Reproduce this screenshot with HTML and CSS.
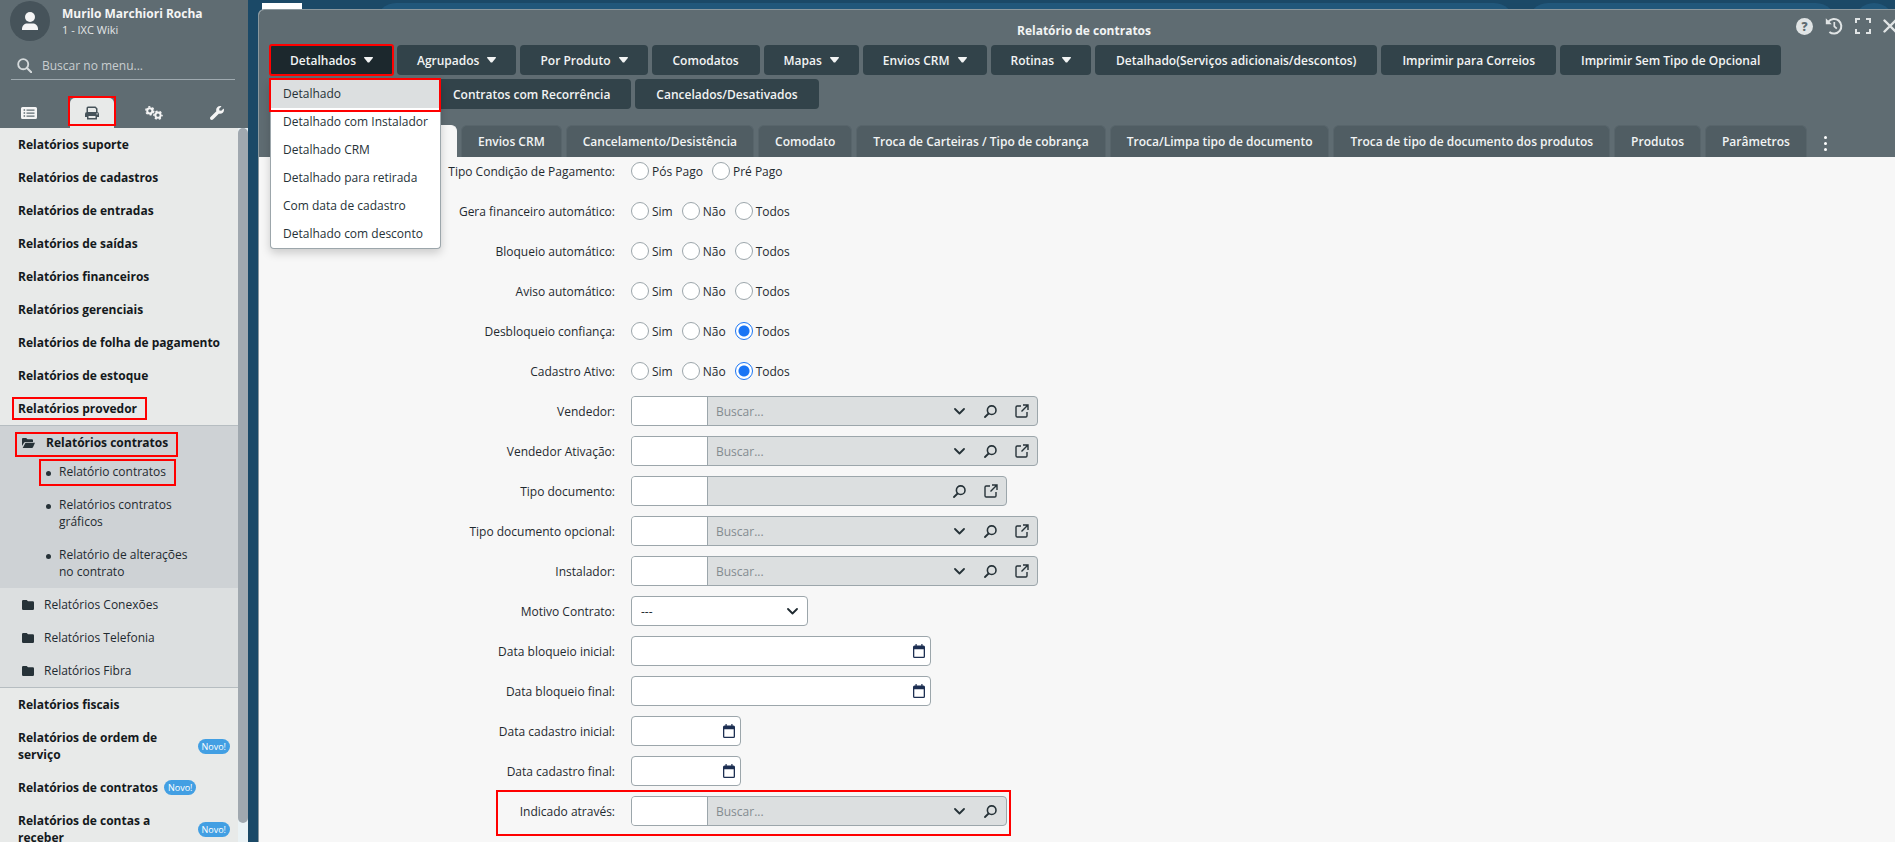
FILE: index.html
```html
<!DOCTYPE html>
<html lang="pt-BR">
<head>
<meta charset="utf-8">
<title>Relatório de contratos</title>
<link rel="stylesheet" href="styles.css">
</head>
<body>
<svg class="defs" aria-hidden="true">
  <symbol id="i-user" viewBox="0 0 16 18"><circle cx="8" cy="5" r="5"/><path d="M0 18.5V17c0-3.500 2.500-5.500 5.500-5.500h5c3 0 5.500 2 5.500 5.500v1.500z"/></symbol>
  <symbol id="i-search" viewBox="0 0 14 14"><circle cx="5.800" cy="5.800" r="4.700" fill="none" stroke="currentColor" stroke-width="1.700"/><path d="M9.300 9.300L13.300 13.300" stroke="currentColor" stroke-width="1.900" stroke-linecap="round"/></symbol>
  <symbol id="i-list" viewBox="0 0 16 12"><path fill-rule="evenodd" d="M1.500 0h13A1.500 1.500 0 0 1 16 1.500v9a1.500 1.500 0 0 1-1.500 1.500h-13A1.500 1.500 0 0 1 0 10.500v-9A1.500 1.500 0 0 1 1.500 0zM2.600 2.300v1.500h1.500V2.300zm0 3v1.500h1.500V5.300zm0 3v1.500h1.500V8.300zM5.500 2.500v1.200h8V2.500zm0 3v1.200h8V5.500zm0 3v1.200h8V8.500z"/></symbol>
  <symbol id="i-print" viewBox="0 0 14 14"><path fill-rule="evenodd" d="M1.500 6V2A1.500 1.500 0 0 1 3 .5h7.500L12.500 2.500V6H11V3L10 2H3v4zM2 6h10a2 2 0 0 1 2 2v3h-2v2.500H2V11H0V8a2 2 0 0 1 2-2zm1.500 4v2h7v-2zM11.500 7.300v1.200h1.200V7.300z"/></symbol>
  <symbol id="i-gears" viewBox="0 0 18 14"><g fill="none" stroke="currentColor"><circle cx="4.800" cy="4.800" r="2.600" stroke-width="2"/><circle cx="4.800" cy="4.800" r="4" stroke-width="1.500" stroke-dasharray="2.100 2.090"/><circle cx="13" cy="9.200" r="2.600" stroke-width="2"/><circle cx="13" cy="9.200" r="4" stroke-width="1.500" stroke-dasharray="2.100 2.090" stroke-dashoffset="1"/></g></symbol>
  <symbol id="i-wrench" viewBox="0 0 512 512"><path d="M507.700 109.100c-2.200-9-13.500-12.100-20.100-5.500l-74.400 74.400-67.900-11.300L334 98.900l74.400-74.400c6.600-6.600 3.400-17.900-5.700-20.200-47.400-11.700-99.600.9-136.600 37.900-39.600 39.600-50.500 97.100-34.100 147.200L18.700 402.800c-25 25-25 65.500 0 90.500s65.500 25 90.500 0l213.200-213.200c50.100 16.700 107.500 5.700 147.400-34.200 37.100-37.100 49.700-89.300 37.900-136.800z"/></symbol>
  <symbol id="i-folder" viewBox="0 0 12 10"><path d="M1.200 0h3.500L6 1.300h4.800A1.200 1.200 0 0 1 12 2.500v6.300A1.200 1.200 0 0 1 10.800 10H1.200A1.200 1.200 0 0 1 0 8.800V1.200A1.200 1.200 0 0 1 1.200 0z"/></symbol>
  <symbol id="i-open" viewBox="0 0 13 10"><path d="M0 8V1a1 1 0 0 1 1-1h3.200l1.300 1.300H10a1 1 0 0 1 1 1V4H3.400A1.600 1.600 0 0 0 2 4.800zM3.500 4.700H13L11 9.200a1.200 1.200 0 0 1-1.100.8H.7z"/></symbol>
  <symbol id="i-history" viewBox="0 0 18 18"><path d="M3.400 4.600A7.300 7.300 0 1 1 4.400 14.900" fill="none" stroke="currentColor" stroke-width="2"/><path d="M.8 1.300v6h6z"/><path d="M9.300 5v4.300l2.500 2.400" fill="none" stroke="currentColor" stroke-width="1.700"/></symbol>
  <symbol id="i-expand" viewBox="0 0 16 16"><path d="M1 5V1h4M11 1h4v4M15 11v4h-4M5 15H1v-4" fill="none" stroke="currentColor" stroke-width="2"/></symbol>
  <symbol id="i-close" viewBox="0 0 14 14"><path d="M1.500 1.500l11 11M12.500 1.500l-11 11" stroke="currentColor" stroke-width="2.400" stroke-linecap="round"/></symbol>
  <symbol id="i-caret" viewBox="0 0 9 6"><path d="M.3 0h8.400L9 .8 5.200 5.500H3.800L0 .8z"/></symbol>
  <symbol id="i-chev" viewBox="0 0 11 7"><path d="M1 1l4.500 4.500L10 1" fill="none" stroke="currentColor" stroke-width="1.800" stroke-linecap="round" stroke-linejoin="round"/></symbol>
  <symbol id="i-find" viewBox="0 0 13 13"><circle cx="7.700" cy="5.200" r="4.300" fill="none" stroke="currentColor" stroke-width="1.600"/><path d="M4.600 8.500L1 12" stroke="currentColor" stroke-width="1.800" stroke-linecap="round"/></symbol>
  <symbol id="i-ext" viewBox="0 0 14 14"><path d="M6 2H2.200A1.200 1.200 0 0 0 1 3.200v8.600A1.200 1.200 0 0 0 2.200 13h8.600a1.200 1.200 0 0 0 1.200-1.200V8M8 1h5v5M12.700 1.300L6.500 7.500" fill="none" stroke="currentColor" stroke-width="1.400"/></symbol>
  <symbol id="i-cal" viewBox="0 0 12 14"><path fill-rule="evenodd" d="M2.500 0h1.200v1.500h4.600V0h1.200v1.500h1A1.500 1.500 0 0 1 12 3v9.500a1.500 1.500 0 0 1-1.500 1.500h-9A1.500 1.500 0 0 1 0 12.500V3a1.500 1.500 0 0 1 1.500-1.500h1zM1.300 5.200v7.500h9.400V5.200z"/></symbol>
</svg>
<div class="app">
  <aside class="sidebar">
    <header class="side-head">
      <div class="user">
        <span class="avatar"><svg width="16" height="18"><use href="#i-user"/></svg></span>
        <div><strong class="user-name">Murilo Marchiori Rocha</strong><span class="user-org">1 - IXC Wiki</span></div>
      </div>
      <label class="menu-search"><svg width="15" height="15"><use href="#i-search"/></svg><input type="text" placeholder="Buscar no menu..." aria-label="Buscar no menu"></label>
      <nav class="side-tabs">
        <button class="side-tab" aria-label="Menu"><svg width="16" height="12"><use href="#i-list"/></svg></button>
        <button class="side-tab active" aria-label="Relatórios"><svg width="14" height="14"><use href="#i-print"/></svg></button>
        <button class="side-tab" aria-label="Configurações"><svg width="18" height="14"><use href="#i-gears"/></svg></button>
        <button class="side-tab" aria-label="Ferramentas"><svg width="14" height="14"><use href="#i-wrench"/></svg></button>
      </nav>
    </header>
    <div class="side-body">
      <nav class="menu">
        <a href="#" class="item">Relatórios suporte</a>
        <a href="#" class="item">Relatórios de cadastros</a>
        <a href="#" class="item">Relatórios de entradas</a>
        <a href="#" class="item">Relatórios de saídas</a>
        <a href="#" class="item">Relatórios financeiros</a>
        <a href="#" class="item">Relatórios gerenciais</a>
        <a href="#" class="item">Relatórios de folha de pagamento</a>
        <a href="#" class="item">Relatórios de estoque</a>
        <a href="#" class="item"><span class="mark mark-provider">Relatórios provedor</span></a>
        <div class="group">
          <div class="open">
            <a href="#" class="open-head"><span class="mark mark-folder"><svg width="13" height="10"><use href="#i-open"/></svg>Relatórios contratos</span></a>
            <a href="#" class="leaf"><span class="mark mark-leaf">Relatório contratos</span></a>
            <a href="#" class="leaf">Relatórios contratos gráficos</a>
            <a href="#" class="leaf">Relatório de alterações no contrato</a>
          </div>
          <a href="#" class="folder"><svg width="12" height="10"><use href="#i-folder"/></svg>Relatórios Conexões</a>
          <a href="#" class="folder"><svg width="12" height="10"><use href="#i-folder"/></svg>Relatórios Telefonia</a>
          <a href="#" class="folder"><svg width="12" height="10"><use href="#i-folder"/></svg>Relatórios Fibra</a>
        </div>
        <a href="#" class="item">Relatórios fiscais</a>
        <a href="#" class="item tagged"><span>Relatórios de ordem de serviço</span><em class="tag">Novo!</em></a>
        <a href="#" class="item tagged"><span>Relatórios de contratos</span><em class="tag">Novo!</em></a>
        <a href="#" class="item tagged"><span>Relatórios de contas a receber</span><em class="tag">Novo!</em></a>
      </nav>
      <div class="track"><div class="thumb"></div></div>
    </div>
  </aside>
  <main class="desk">
    <div class="backdrop"><i class="bd-white"></i><i class="bd-bar"></i><i class="bd-bar2"></i><i class="bd-dot"></i></div>
    <section class="window">
      <header class="win-head">
        <div class="title-row">
          <h1 class="title">Relatório de contratos</h1>
          <div class="win-tools">
            <button class="help" aria-label="Ajuda">?</button>
            <button aria-label="Histórico"><svg width="18" height="18"><use href="#i-history"/></svg></button>
            <button aria-label="Expandir"><svg width="16" height="16"><use href="#i-expand"/></svg></button>
            <button aria-label="Fechar"><svg width="14" height="14"><use href="#i-close"/></svg></button>
          </div>
        </div>
        <div class="toolbar">
          <div class="btn-row">
            <div class="drop">
              <button class="btn current" aria-expanded="true">Detalhados<svg width="9" height="6"><use href="#i-caret"/></svg></button>
              <div class="dropdown">
                <a href="#" class="chosen">Detalhado</a>
                <a href="#">Detalhado com Instalador</a>
                <a href="#">Detalhado CRM</a>
                <a href="#">Detalhado para retirada</a>
                <a href="#">Com data de cadastro</a>
                <a href="#">Detalhado com desconto</a>
              </div>
            </div>
            <button class="btn">Agrupados<svg width="9" height="6"><use href="#i-caret"/></svg></button>
            <button class="btn">Por Produto<svg width="9" height="6"><use href="#i-caret"/></svg></button>
            <button class="btn">Comodatos</button>
            <button class="btn">Mapas<svg width="9" height="6"><use href="#i-caret"/></svg></button>
            <button class="btn">Envios CRM<svg width="9" height="6"><use href="#i-caret"/></svg></button>
            <button class="btn">Rotinas<svg width="9" height="6"><use href="#i-caret"/></svg></button>
            <button class="btn">Detalhado(Serviços adicionais/descontos)</button>
            <button class="btn">Imprimir para Correios</button>
            <button class="btn">Imprimir Sem Tipo de Opcional</button>
          </div>
          <div class="btn-row second">
            <button class="btn">Contratos com Recorrência</button>
            <button class="btn">Cancelados/Desativados</button>
          </div>
        </div>
        <nav class="tabs">
          <span class="tab on"></span>
          <button class="tab">Envios CRM</button>
          <button class="tab">Cancelamento/Desistência</button>
          <button class="tab">Comodato</button>
          <button class="tab">Troca de Carteiras / Tipo de cobrança</button>
          <button class="tab">Troca/Limpa tipo de documento</button>
          <button class="tab">Troca de tipo de documento dos produtos</button>
          <button class="tab">Produtos</button>
          <button class="tab">Parâmetros</button>
          <button class="more" aria-label="Mais abas"><i></i><i></i><i></i></button>
        </nav>
      </header>
      <form class="form">
        <div class="row"><span class="lbl">Tipo Condição de Pagamento:</span><div class="radios"><label><input type="radio" name="r1">Pós Pago</label><label><input type="radio" name="r1">Pré Pago</label></div></div>
        <div class="row"><span class="lbl">Gera financeiro automático:</span><div class="radios"><label><input type="radio" name="r2">Sim</label><label><input type="radio" name="r2">Não</label><label><input type="radio" name="r2">Todos</label></div></div>
        <div class="row"><span class="lbl">Bloqueio automático:</span><div class="radios"><label><input type="radio" name="r3">Sim</label><label><input type="radio" name="r3">Não</label><label><input type="radio" name="r3">Todos</label></div></div>
        <div class="row"><span class="lbl">Aviso automático:</span><div class="radios"><label><input type="radio" name="r4">Sim</label><label><input type="radio" name="r4">Não</label><label><input type="radio" name="r4">Todos</label></div></div>
        <div class="row"><span class="lbl">Desbloqueio confiança:</span><div class="radios"><label><input type="radio" name="r5">Sim</label><label><input type="radio" name="r5">Não</label><label><input type="radio" name="r5" checked>Todos</label></div></div>
        <div class="row"><span class="lbl">Cadastro Ativo:</span><div class="radios"><label><input type="radio" name="r6">Sim</label><label><input type="radio" name="r6">Não</label><label><input type="radio" name="r6" checked>Todos</label></div></div>
        <div class="row"><label class="lbl" for="f1">Vendedor:</label><div class="lookup"><input id="f1" class="code" type="text"><input class="find" type="text" placeholder="Buscar..." aria-label="Buscar vendedor"><button type="button" aria-label="Abrir lista"><svg width="11" height="7"><use href="#i-chev"/></svg></button><button type="button" aria-label="Pesquisar"><svg width="13" height="13"><use href="#i-find"/></svg></button><button type="button" aria-label="Abrir cadastro"><svg width="14" height="14"><use href="#i-ext"/></svg></button></div></div>
        <div class="row"><label class="lbl" for="f2">Vendedor Ativação:</label><div class="lookup"><input id="f2" class="code" type="text"><input class="find" type="text" placeholder="Buscar..." aria-label="Buscar vendedor ativação"><button type="button" aria-label="Abrir lista"><svg width="11" height="7"><use href="#i-chev"/></svg></button><button type="button" aria-label="Pesquisar"><svg width="13" height="13"><use href="#i-find"/></svg></button><button type="button" aria-label="Abrir cadastro"><svg width="14" height="14"><use href="#i-ext"/></svg></button></div></div>
        <div class="row"><label class="lbl" for="f3">Tipo documento:</label><div class="lookup"><input id="f3" class="code" type="text"><input class="find" type="text" aria-label="Buscar tipo documento"><button type="button" aria-label="Pesquisar"><svg width="13" height="13"><use href="#i-find"/></svg></button><button type="button" aria-label="Abrir cadastro"><svg width="14" height="14"><use href="#i-ext"/></svg></button></div></div>
        <div class="row"><label class="lbl" for="f4">Tipo documento opcional:</label><div class="lookup"><input id="f4" class="code" type="text"><input class="find" type="text" placeholder="Buscar..." aria-label="Buscar tipo documento opcional"><button type="button" aria-label="Abrir lista"><svg width="11" height="7"><use href="#i-chev"/></svg></button><button type="button" aria-label="Pesquisar"><svg width="13" height="13"><use href="#i-find"/></svg></button><button type="button" aria-label="Abrir cadastro"><svg width="14" height="14"><use href="#i-ext"/></svg></button></div></div>
        <div class="row"><label class="lbl" for="f5">Instalador:</label><div class="lookup"><input id="f5" class="code" type="text"><input class="find" type="text" placeholder="Buscar..." aria-label="Buscar instalador"><button type="button" aria-label="Abrir lista"><svg width="11" height="7"><use href="#i-chev"/></svg></button><button type="button" aria-label="Pesquisar"><svg width="13" height="13"><use href="#i-find"/></svg></button><button type="button" aria-label="Abrir cadastro"><svg width="14" height="14"><use href="#i-ext"/></svg></button></div></div>
        <div class="row"><label class="lbl" for="f6">Motivo Contrato:</label><div class="pick"><select id="f6"><option>---</option></select><svg width="11" height="7"><use href="#i-chev"/></svg></div></div>
        <div class="row"><label class="lbl" for="f7">Data bloqueio inicial:</label><div class="date wide"><input id="f7" type="text"><button type="button" aria-label="Abrir calendário"><svg width="12" height="14"><use href="#i-cal"/></svg></button></div></div>
        <div class="row"><label class="lbl" for="f8">Data bloqueio final:</label><div class="date wide"><input id="f8" type="text"><button type="button" aria-label="Abrir calendário"><svg width="12" height="14"><use href="#i-cal"/></svg></button></div></div>
        <div class="row"><label class="lbl" for="f9">Data cadastro inicial:</label><div class="date"><input id="f9" type="text"><button type="button" aria-label="Abrir calendário"><svg width="12" height="14"><use href="#i-cal"/></svg></button></div></div>
        <div class="row"><label class="lbl" for="f10">Data cadastro final:</label><div class="date"><input id="f10" type="text"><button type="button" aria-label="Abrir calendário"><svg width="12" height="14"><use href="#i-cal"/></svg></button></div></div>
        <div class="row referral"><label class="lbl" for="f11">Indicado através:</label><div class="lookup"><input id="f11" class="code" type="text"><input class="find" type="text" placeholder="Buscar..." aria-label="Buscar indicação"><button type="button" aria-label="Abrir lista"><svg width="11" height="7"><use href="#i-chev"/></svg></button><button type="button" aria-label="Pesquisar"><svg width="13" height="13"><use href="#i-find"/></svg></button></div></div>
      </form>
    </section>
  </main>
</div>
</body>
</html>
```
FILE: styles.css
```css
*, *::before, *::after { box-sizing: border-box; }
body { margin: 0; font: 12px/17px "Open Sans", "Noto Sans", sans-serif; color: #1f2a30; overflow: hidden; }
button, input, select { font: inherit; color: inherit; margin: 0; padding: 0; border: 0; background: none; }
a { color: inherit; text-decoration: none; }
svg { fill: currentColor; flex: none; display: block; }
.defs { display: none; }
.app { display: flex; height: 100vh; overflow: hidden; }

/* Sidebar */
.sidebar { width: 248px; flex: none; display: flex; flex-direction: column; background: #e8eae9; }
.side-head { background: #5f6c72; color: #f5f5f5; height: 128px; flex: none; display: flex; flex-direction: column; }
.user { display: flex; gap: 12px; padding: 1px 10px 0; height: 48px; }
.avatar { width: 40px; height: 40px; border-radius: 50%; background: #46535a; display: flex; align-items: center; justify-content: center; }
.user-name, .user-org { display: block; }
.user-name { padding-top: 4px; }
.user-org { font-size: 11px; line-height: 16px; color: #e3e6e7; }
.menu-search { display: flex; align-items: center; gap: 10px; margin: 0 13px 0 11px; padding: 4px 0 0 6px; height: 32px; border-bottom: 1px solid #9faab0; color: #d5dadc; }
.menu-search input { flex: 1; min-width: 0; outline: 0; }
.menu-search input::placeholder { color: #c9ced0; opacity: 1; }
.side-tabs { display: grid; grid-template-columns: repeat(4, 44px); justify-content: space-between; padding: 18px 9px 0 7px; flex: 1; }
.side-tab { display: flex; align-items: center; justify-content: center; border-radius: 5px 5px 0 0; }
.side-tab.active { position: relative; background: #e8eae9; color: #46535a; }
.side-tab.active::after { content: ""; position: absolute; inset: -2px -2px 2px; border: 2px solid red; }
.side-body { flex: 1; min-height: 0; display: flex; overflow: hidden; }
.menu { flex: 1; }
.item { display: block; padding: 8px 8px 8px 18px; font-weight: 700; color: #14191c; }
.mark { outline: 2px solid red; }
.mark-provider { padding: 1px 8px 1px 4px; margin-left: -4px; }
.group { border: 1px solid #b6bdc1; border-width: 1px 0; background: #dcdfe0; }
.open { background: #ced2d5; }
.open-head { display: block; padding: 8px 0 3px 22px; font-weight: 700; color: #14191c; }
.mark-folder { display: flex; width: max-content; align-items: center; gap: 11px; padding: 0 8px 4px 5px; margin: 0 0 -3px -5px; }
.leaf { display: block; position: relative; padding: 8px 40px 8px 59px; }
.leaf::before { content: ""; position: absolute; left: 46px; top: 16px; width: 5px; height: 5px; border-radius: 50%; background: #263238; }
.mark-leaf { padding: 2px 8px 4px 18px; margin-left: -18px; }
.folder { display: flex; align-items: center; gap: 10px; padding: 8px 22px; }
.open-head svg, .folder svg { color: #263238; }
.tagged { display: flex; align-items: center; gap: 6px; }
.tag { flex: none; font-style: normal; font-weight: 500; font-size: 9px; line-height: 15px; padding: 0 4px; border-radius: 8px; background: #429fe3; color: #fff; }
.track { width: 10px; background: #eaf2f5; }
.thumb { height: 695px; border-radius: 5px; background: #a0a8af; }

/* Workspace */
.desk { flex: 1; min-width: 0; position: relative; background: #1b4967; padding: 9px 0 0 10px; overflow: hidden; }
.backdrop i { position: absolute; top: 3px; height: 40px; background: #21577a; }
.backdrop .bd-white { left: 14px; width: 40px; background: #fff; }
.backdrop .bd-bar { left: 128px; width: 1138px; border-radius: 20px; }
.backdrop .bd-bar2 { left: 1280px; width: 308px; border-radius: 20px; }
.backdrop .bd-dot { left: 1606px; width: 40px; border-radius: 50%; }
.window { position: relative; width: calc(100% + 15px); height: 100%; background: #f7f7f7; border: 1px solid #8b989e; border-bottom: 0; border-radius: 6px 6px 0 0; }
.win-head { background: #5f6c72; color: #f2f4f4; border-radius: 5px 5px 0 0; padding: 0 11px; }
.title-row { display: flex; align-items: center; justify-content: center; height: 35px; padding-top: 6px; position: relative; }
.title { margin: 0; font-size: 12px; font-weight: 700; }
.win-tools { position: absolute; right: 1px; top: 7px; display: flex; align-items: center; gap: 12px; color: #e0e4e5; }
.help { width: 17px; height: 17px; border-radius: 50%; background: #e0e4e5; color: #5f6c72; font-weight: 800; }
.toolbar { display: grid; gap: 4px; }
.btn-row { display: flex; gap: 4px; }
.second { padding-left: 162px; }
.drop { position: relative; }
.btn { height: 30px; padding: 0 21px; border-radius: 4px; background: #32434a; font-weight: 600; display: flex; align-items: center; gap: 8px; white-space: nowrap; }
.btn:has(svg) { padding: 0 20px; }
.btn.current { background: #1c282d; border-radius: 2px; outline: 2px solid red; outline-offset: -1px; }
.dropdown { position: absolute; z-index: 5; top: 35px; left: 0; width: 171px; background: #fff; color: #263238; border: 1px solid #9ca6ab; border-top: 0; border-radius: 4px; box-shadow: 0 4px 10px rgba(0,0,0,.18); }
.dropdown a { display: block; padding: 5px 12px 6px; white-space: nowrap; }
.dropdown .chosen { position: relative; background: #dcdfe0; }
.chosen::after { content: ""; position: absolute; inset: -2px -1px -4px -2px; border: 2px solid red; }
.tabs { display: flex; align-items: flex-end; gap: 4px; padding-top: 16px; }
.tab { height: 32px; padding: 0 16px; border: 1px solid #58656b; border-bottom: 0; border-radius: 6px 6px 0 0; background: #505d63; font-weight: 600; white-space: nowrap; }
.tab.on { width: 187px; background: #f7f7f7; border-color: #f7f7f7; }
.more { width: 16px; height: 28px; display: grid; align-content: center; justify-content: end; gap: 3px; }
.more i { width: 3px; height: 3px; border-radius: 50%; background: #fff; }

/* Form */
.form { display: grid; gap: 10px; margin-top: -1px; }
.row { display: grid; grid-template-columns: 356px 1fr; column-gap: 16px; align-items: center; height: 30px; }
.lbl { text-align: right; }
.radios { display: flex; gap: 9px; }
.radios label { display: flex; align-items: center; gap: 3px; }
.radios input { appearance: none; width: 18px; height: 18px; border-radius: 50%; border: 1px solid #9ca6ab; background: #fff; }
.radios input:checked { border-color: #1a75f5; background: radial-gradient(circle, #1a75f5 5px, #fff 6px); }
.lookup { justify-self: start; display: flex; height: 30px; border: 1px solid #9ca6ab; border-radius: 4px; background: #dcdfe0; overflow: hidden; color: #263238; }
.code { width: 76px; background: #fff; border-right: 1px solid #9ca6ab; }
.find { width: 236px; padding: 0 8px; }
.find::placeholder { color: #848c90; opacity: 1; }
.lookup button { width: 31px; display: flex; align-items: center; justify-content: center; }
.pick { position: relative; width: 177px; }
.pick select { appearance: none; width: 100%; height: 30px; padding: 0 9px; border: 1px solid #9ca6ab; border-radius: 4px; background: #fff; }
.pick svg { position: absolute; right: 10px; top: 12px; pointer-events: none; }
.date { display: flex; align-items: center; width: 110px; height: 30px; padding-right: 5px; border: 1px solid #9ca6ab; border-radius: 4px; background: #fff; color: #1d2f52; }
.date.wide { width: 300px; }
.date input { flex: 1; min-width: 0; }
.referral { position: relative; }
.referral::after { content: ""; position: absolute; left: 237px; top: -6px; width: 515px; height: 46px; border: 2px solid red; pointer-events: none; }
```
